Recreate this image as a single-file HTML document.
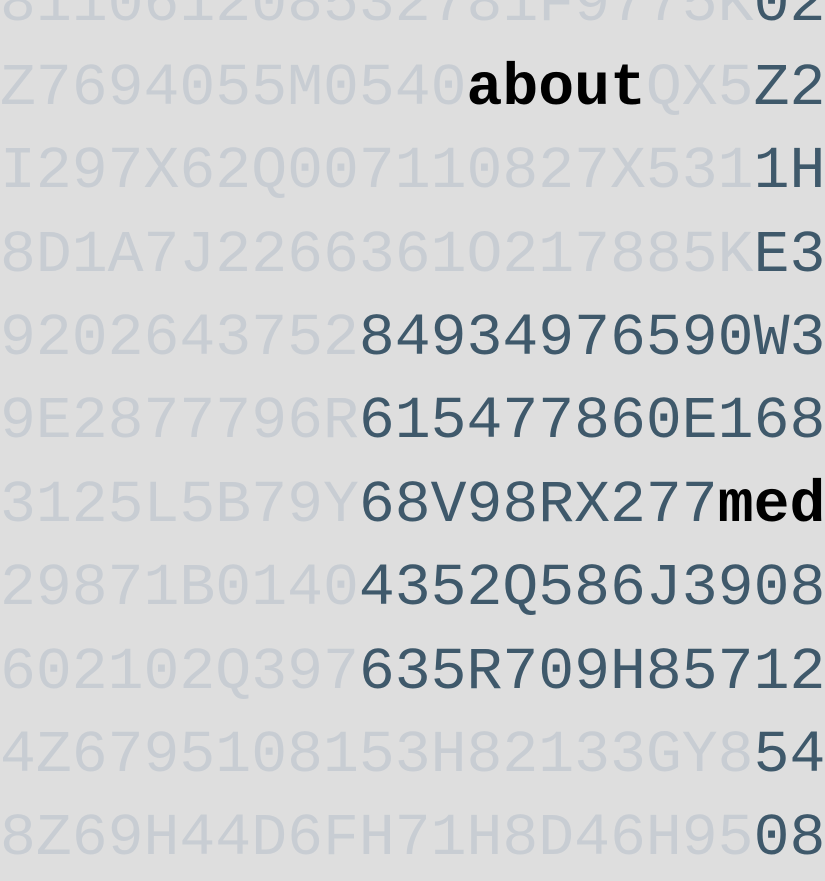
<!DOCTYPE html>
<html><head><meta charset="utf-8"><style>
html,body{margin:0;padding:0;background:#dedede;width:825px;height:825px;overflow:hidden}
.g{position:absolute;left:0;top:-36.6px;font-family:"Liberation Mono","Courier New",monospace;font-size:59.8px;line-height:83.4px;color:#c8cdd3;white-space:pre}
.d{color:#3f596b}
.b{color:#000;font-weight:bold}
</style></head><body>
<div class="g">811061208532781F9775K<span class="d">02</span>
Z7694055M0540<span class="b">about</span>QX5<span class="d">Z2</span>
I297X62Q007110827X531<span class="d">1H</span>
8D1A7J2266361O217885K<span class="d">E3</span>
9202643752<span class="d">84934976590W3</span>
9E2877796R<span class="d">615477860E168</span>
3125L5B79Y<span class="d">68V98RX277</span><span class="b">med</span>
29871B0140<span class="d">4352Q586J3908</span>
602102Q397<span class="d">635R709H85712</span>
4Z6795108153H82133GY8<span class="d">54</span>
8Z69H44D6FH71H8D46H95<span class="d">08</span></div>
</body></html>
